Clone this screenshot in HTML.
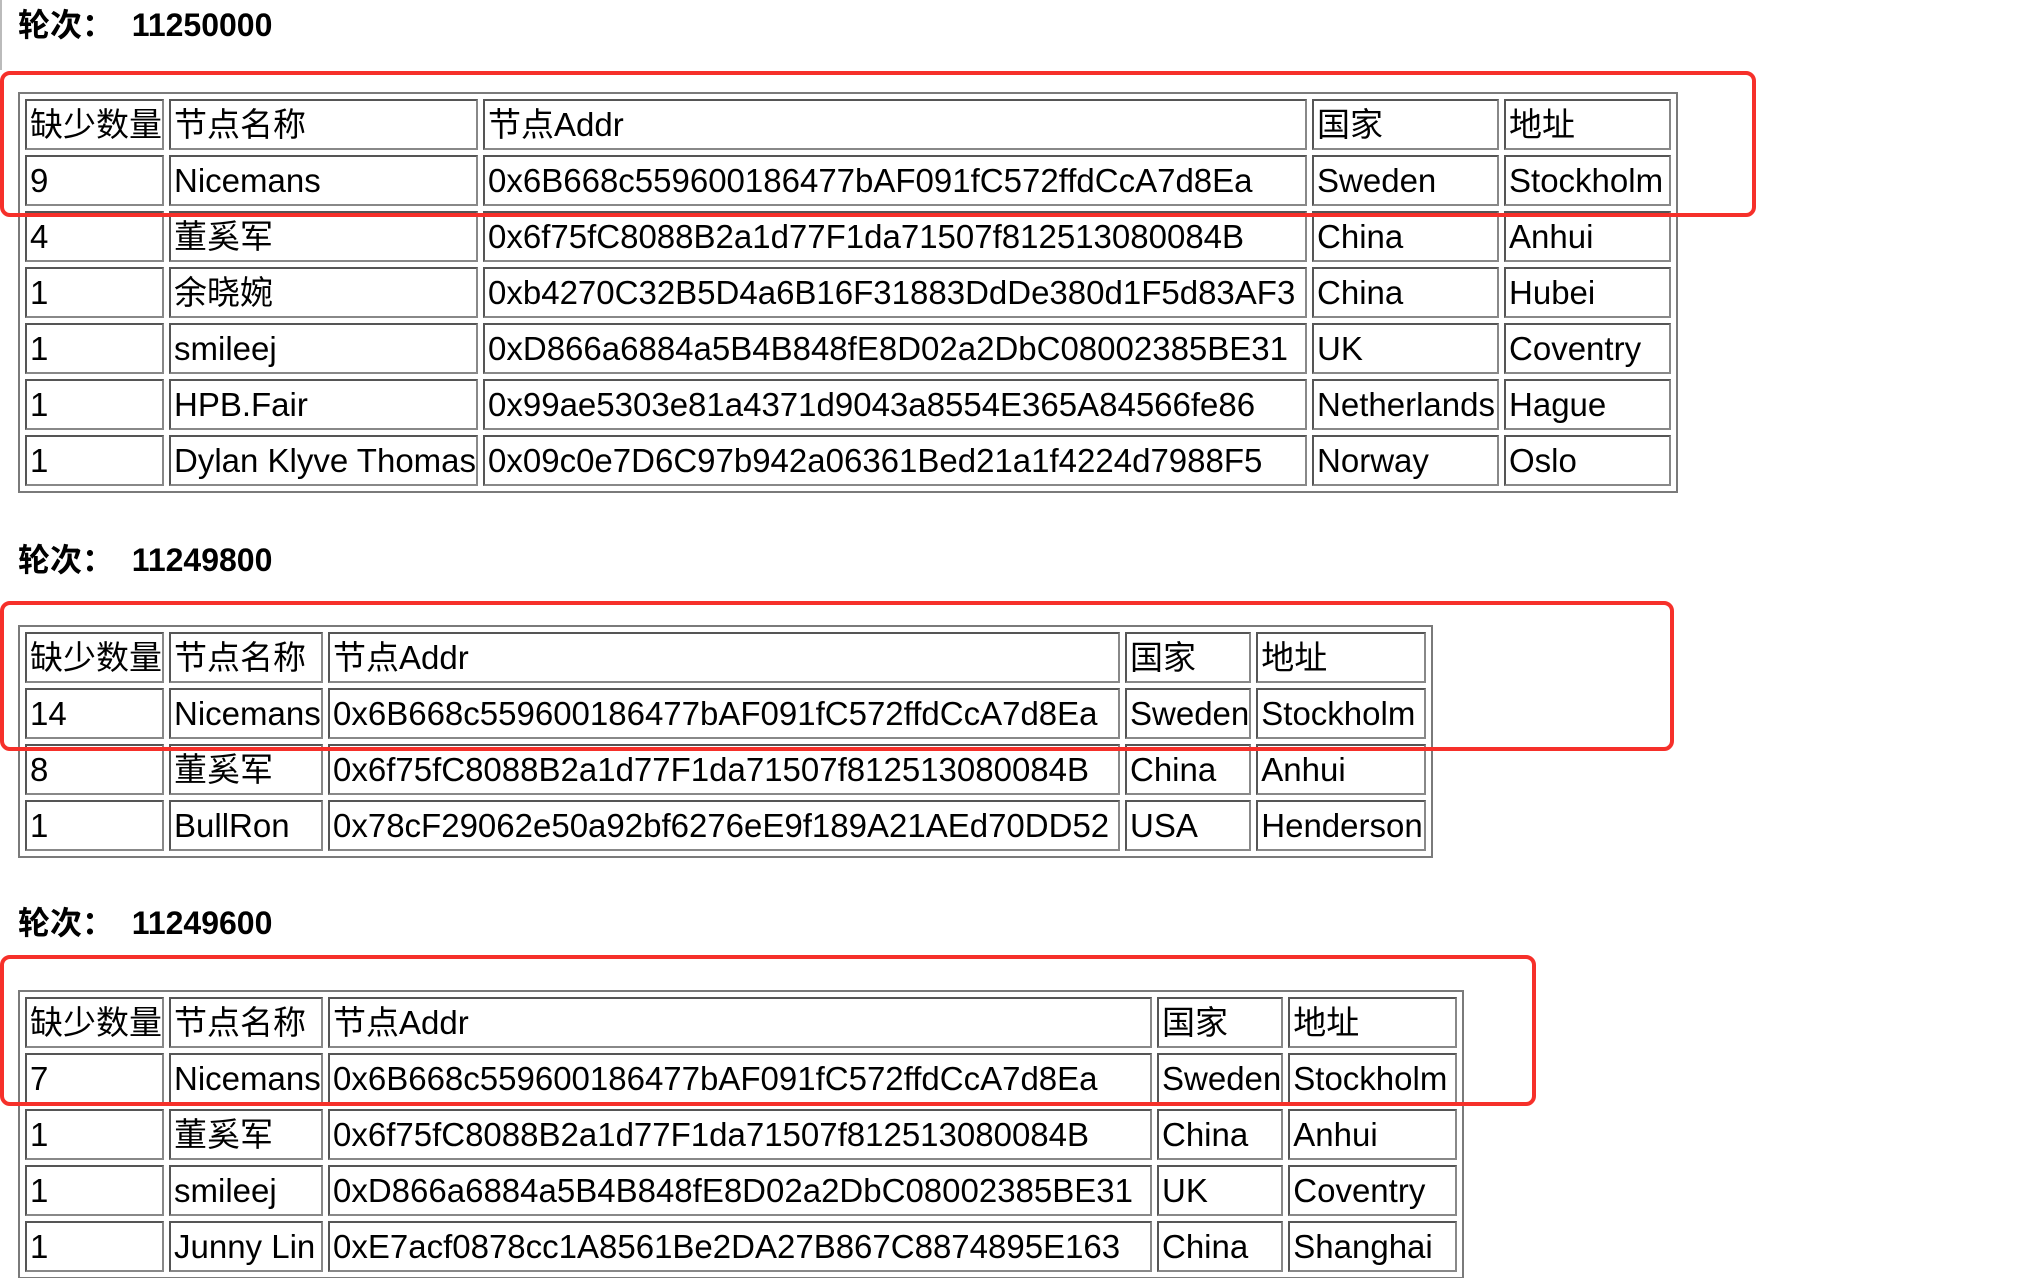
<!DOCTYPE html>
<html><head><meta charset="utf-8"><style>
html,body{margin:0;padding:0;background:#fff;width:2030px;height:1278px;overflow:hidden;position:relative;font-family:"Liberation Sans","Noto Sans CJK SC",sans-serif;color:#000}
.h{position:absolute;left:18px;font-size:32px;font-weight:bold;line-height:40px;white-space:pre}
table{position:absolute;left:18px;border:2px solid #7a7a7a;border-spacing:5px;table-layout:fixed;border-collapse:separate}
td{box-sizing:border-box;height:51px;border:2px solid #555;border-right-color:#888;border-bottom-color:#888;padding:0 0 0 3px;font-size:33px;line-height:47px;white-space:nowrap;overflow:visible;vertical-align:middle}
.r{position:absolute;border:4px solid #f6302a;border-radius:10px;box-sizing:border-box}
.edge{position:absolute;left:0;top:0;width:2px;height:70px;background:#bbb}
</style></head><body>
<div class="edge"></div>
<div class="h" style="top:5px">轮次：  11250000</div>
<table style="top:92px">
<colgroup><col style="width:137px"><col style="width:309px"><col style="width:824px"><col style="width:187px"><col style="width:167px"></colgroup>
<tr><td>缺少数量</td><td>节点名称</td><td>节点Addr</td><td>国家</td><td>地址</td></tr>
<tr><td>9</td><td>Nicemans</td><td>0x6B668c559600186477bAF091fC572ffdCcA7d8Ea</td><td>Sweden</td><td>Stockholm</td></tr>
<tr><td>4</td><td>董奚军</td><td>0x6f75fC8088B2a1d77F1da71507f812513080084B</td><td>China</td><td>Anhui</td></tr>
<tr><td>1</td><td>余晓婉</td><td>0xb4270C32B5D4a6B16F31883DdDe380d1F5d83AF3</td><td>China</td><td>Hubei</td></tr>
<tr><td>1</td><td>smileej</td><td>0xD866a6884a5B4B848fE8D02a2DbC08002385BE31</td><td>UK</td><td>Coventry</td></tr>
<tr><td>1</td><td>HPB.Fair</td><td>0x99ae5303e81a4371d9043a8554E365A84566fe86</td><td>Netherlands</td><td>Hague</td></tr>
<tr><td>1</td><td>Dylan Klyve Thomas</td><td>0x09c0e7D6C97b942a06361Bed21a1f4224d7988F5</td><td>Norway</td><td>Oslo</td></tr>
</table>
<div class="h" style="top:540px">轮次：  11249800</div>
<table style="top:625px">
<colgroup><col style="width:137px"><col style="width:154px"><col style="width:792px"><col style="width:125px"><col style="width:170px"></colgroup>
<tr><td>缺少数量</td><td>节点名称</td><td>节点Addr</td><td>国家</td><td>地址</td></tr>
<tr><td>14</td><td>Nicemans</td><td>0x6B668c559600186477bAF091fC572ffdCcA7d8Ea</td><td>Sweden</td><td>Stockholm</td></tr>
<tr><td>8</td><td>董奚军</td><td>0x6f75fC8088B2a1d77F1da71507f812513080084B</td><td>China</td><td>Anhui</td></tr>
<tr><td>1</td><td>BullRon</td><td>0x78cF29062e50a92bf6276eE9f189A21AEd70DD52</td><td>USA</td><td>Henderson</td></tr>
</table>
<div class="h" style="top:903px">轮次：  11249600</div>
<table style="top:990px">
<colgroup><col style="width:137px"><col style="width:154px"><col style="width:824px"><col style="width:126px"><col style="width:169px"></colgroup>
<tr><td>缺少数量</td><td>节点名称</td><td>节点Addr</td><td>国家</td><td>地址</td></tr>
<tr><td>7</td><td>Nicemans</td><td>0x6B668c559600186477bAF091fC572ffdCcA7d8Ea</td><td>Sweden</td><td>Stockholm</td></tr>
<tr><td>1</td><td>董奚军</td><td>0x6f75fC8088B2a1d77F1da71507f812513080084B</td><td>China</td><td>Anhui</td></tr>
<tr><td>1</td><td>smileej</td><td>0xD866a6884a5B4B848fE8D02a2DbC08002385BE31</td><td>UK</td><td>Coventry</td></tr>
<tr><td>1</td><td>Junny Lin</td><td>0xE7acf0878cc1A8561Be2DA27B867C8874895E163</td><td>China</td><td>Shanghai</td></tr>
</table>
<div class="r" style="left:0;top:71px;width:1756px;height:146px"></div>
<div class="r" style="left:0;top:601px;width:1674px;height:150px"></div>
<div class="r" style="left:0;top:955px;width:1536px;height:151px"></div>
</body></html>
